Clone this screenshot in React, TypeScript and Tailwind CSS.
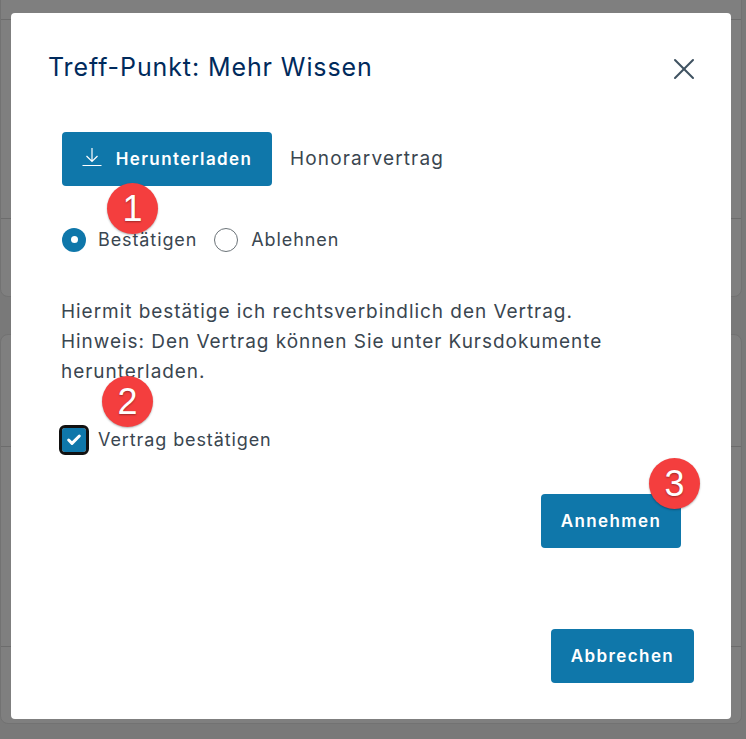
import { Check, X } from "lucide-react";

const font = { fontFamily: "Inter, 'Open Sans', sans-serif" };

function Badge({ n, className }: { n: number; className: string }) {
  return (
    <div
      className={`absolute flex h-[51px] w-[51px] items-center justify-center rounded-full bg-[#f43e3e] text-[36px] leading-none text-white shadow-[0_1px_2px_rgba(0,0,0,0.3)] [font-family:'Liberation_Sans',sans-serif] [text-shadow:0_1px_2px_rgba(0,0,0,0.35)] ${className}`}>
      {n}
    </div>
  );
}

function PageBehind() {
  return (
    <div className="flex h-[739px] flex-col gap-[37px] bg-[#797979] pr-1 pb-[15px]">
      <div className="-mt-4 flex h-[313px] flex-col rounded-b-lg border border-[#727272] bg-[#7f7f7f]">
        <div className="mt-[34px] border-b border-[#6c6c6c]" />
        <div className="mt-[198px] border-b border-[#6c6c6c]" />
      </div>
      <div className="flex flex-1 flex-col rounded-lg border border-[#727272] bg-[#7f7f7f]">
        <div className="mt-[111px] border-b border-[#6c6c6c]" />
        <div className="mt-[199px] border-b border-[#6c6c6c]" />
      </div>
    </div>
  );
}

export default function App() {
  return (
    <div className="relative h-[739px] w-[746px] overflow-hidden" style={font}>
      <PageBehind />

      <div
        role="dialog"
        className="absolute top-[13px] left-[11px] flex h-[706px] w-[720px] flex-col rounded-[4px] bg-white pt-[38px] pr-[37px] pb-[36px] pl-[37px] text-[#3a4650]">
        <div className="flex items-center justify-between">
          <h2 className="text-[25px] leading-8 font-normal tracking-[0.9px] text-[#002a5c]">
            Treff-Punkt: Mehr Wissen
          </h2>
          <X
            className="-mt-[2px] -mr-2 -mb-[6px] h-9 w-9 text-[#3f5261]"
            strokeWidth={1.35}
          />
        </div>

        <div className="mt-[49px] ml-[14px] flex items-center gap-[18px]">
          <button className="flex h-[54px] w-[210px] items-center justify-center gap-[14px] rounded-[4px] bg-[#0f77aa] pt-[2px] text-[17px] font-semibold tracking-[1.4px] text-white">
            <svg
              viewBox="0 0 20 20"
              className="-mt-[7px] h-5 w-5"
              fill="none"
              stroke="currentColor"
              strokeWidth="1.2">
              <path d="M0.5 18.5h19M10 1v13.5M4.5 9l5.5 5.5L15.5 9" />
            </svg>
            Herunterladen
          </button>
          <span className="pt-px text-[19px] tracking-[1.15px]">Honorarvertrag</span>
        </div>

        <div className="mt-[40px] ml-[14px] flex items-center text-[18px] tracking-[0.9px]">
          <span className="flex h-6 w-6 items-center justify-center rounded-full bg-[#0f77aa]">
            <span className="h-[7px] w-[7px] rounded-full bg-white" />
          </span>
          <span className="ml-3">Bestätigen</span>
          <span className="ml-[17px] h-6 w-6 rounded-full border border-[#6b7378]" />
          <span className="ml-[13px]">Ablehnen</span>
        </div>

        <p className="mt-[44px] ml-[13px] text-[19px] leading-[30px] tracking-[0.95px]">
          Hiermit bestätige ich rechtsverbindlich den Vertrag.
          <br />
          Hinweis: Den Vertrag können Sie unter Kursdokumente
          <br />
          herunterladen.
        </p>

        <div className="mt-[39px] ml-[14px] flex items-center text-[18px] tracking-[0.9px]">
          <span className="flex h-6 w-6 items-center justify-center rounded-[3px] bg-[#0f77aa] outline-[3px] outline-offset-[0.5px] outline-[#111]">
            <Check className="h-4 w-4 text-white" strokeWidth={4.5} />
          </span>
          <span className="ml-3">Vertrag bestätigen</span>
        </div>

        <div className="mt-[41px] flex justify-end pr-[13px]">
          <button className="h-[54px] w-[140px] rounded-[4px] bg-[#0f77aa] pt-[2px] text-[17px] font-semibold tracking-[1.4px] text-white">
            Annehmen
          </button>
        </div>

        <div className="mt-auto flex justify-end">
          <button className="h-[54px] w-[143px] rounded-[4px] bg-[#0f77aa] pt-[2px] text-[17px] font-semibold tracking-[1.4px] text-white">
            Abbrechen
          </button>
        </div>
      </div>

      <Badge n={1} className="top-[183px] left-[107px]" />
      <Badge n={2} className="top-[376px] left-[102px]" />
      <Badge n={3} className="top-[458px] left-[649px]" />
    </div>
  );
}
